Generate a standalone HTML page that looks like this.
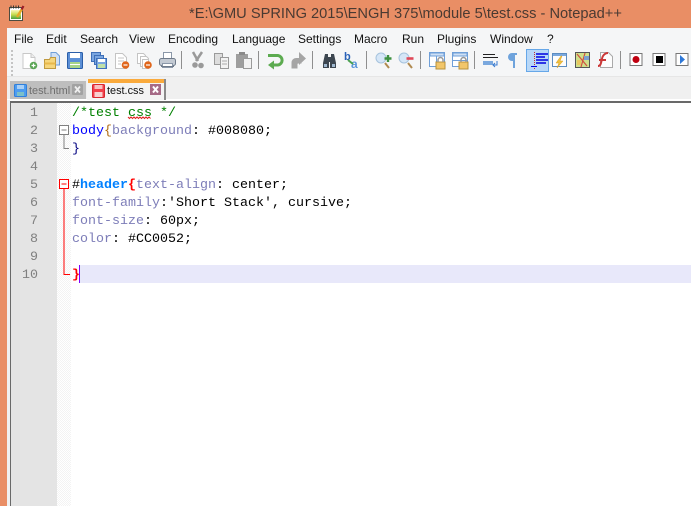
<!DOCTYPE html>
<html><head><meta charset="utf-8"><style>
html,body{margin:0;padding:0;width:691px;height:506px;overflow:hidden;background:#fff}
div,span{box-sizing:border-box}
.a{position:absolute}
#menu span{position:absolute;top:31px;font:12px/16px "Liberation Sans",sans-serif;color:#111}
.ln{position:absolute;left:11px;width:27px;text-align:right;font:13.33px/18px "Liberation Mono",monospace;color:#808080}
.c{position:absolute;left:72px;white-space:pre;font:13.33px/18px "Liberation Mono",monospace;color:#000}
.p{color:#7d7db8}.g{color:#008000}
</style></head><body>
<div class="a" style="left:0;top:0;width:691px;height:28px;background:#E98E65"></div>
<div class="a" style="left:0;top:28px;width:7px;height:478px;background:#E98E65"></div>
<div class="a" style="left:189px;top:5px;white-space:pre;font:14.65px/18px 'Liberation Sans',sans-serif;color:#4a3a32">*E:\GMU SPRING 2015\ENGH 375\module 5\test.css - Notepad++</div>
<div class="a" style="left:7px;top:28px;width:684px;height:20px;background:#F5F6F7"></div>
<div class="a" style="left:7px;top:48px;width:684px;height:28px;background:#F5F6F7"></div>
<div class="a" style="left:7px;top:76px;width:684px;height:1px;background:#E6E6E6"></div>
<div class="a" style="left:7px;top:77px;width:684px;height:23px;background:#F0F0F0"></div>
<div id="menu">
<span style="left:14px">File</span><span style="left:46px">Edit</span><span style="left:80px">Search</span><span style="left:129px">View</span><span style="left:168px">Encoding</span><span style="left:232px">Language</span><span style="left:298px">Settings</span><span style="left:354px">Macro</span><span style="left:402px">Run</span><span style="left:437px">Plugins</span><span style="left:490px">Window</span><span style="left:547px">?</span>
</div>
<!-- editor frame -->
<div class="a" style="left:7px;top:99px;width:684px;height:2px;background:#fff"></div>
<div class="a" style="left:7px;top:100px;width:3px;height:406px;background:#f0f0f0"></div>
<div class="a" style="left:10px;top:101px;width:681px;height:2px;background:#696969"></div>
<div class="a" style="left:10px;top:101px;width:1px;height:405px;background:#696969"></div>
<div class="a" style="left:11px;top:103px;width:46px;height:403px;background:#E4E4E4"></div>
<div class="a" style="left:57px;top:103px;width:14px;height:403px;background-color:#f3f3f3;background-image:linear-gradient(45deg,#fff 25%,transparent 25%,transparent 75%,#fff 75%),linear-gradient(45deg,#fff 25%,transparent 25%,transparent 75%,#fff 75%);background-size:2px 2px;background-position:0 0,1px 1px"></div>
<div class="a" style="left:80px;top:265px;width:611px;height:18px;background:#E8E8FA"></div>
<div class="a" style="left:79px;top:265px;width:1px;height:18px;background:#8000FF"></div>

<div class="ln" style="top:105px">1</div><div class="ln" style="top:123px">2</div><div class="ln" style="top:141px">3</div><div class="ln" style="top:159px">4</div><div class="ln" style="top:177px">5</div><div class="ln" style="top:195px">6</div><div class="ln" style="top:213px">7</div><div class="ln" style="top:231px">8</div><div class="ln" style="top:249px">9</div><div class="ln" style="top:267px">10</div>

<div class="c g" style="top:105px">/*test css */</div>
<div class="c" style="top:123px"><span style="color:#0000ff">body</span><span style="color:#b06a10">{</span><span class="p">background</span>: #008080;</div>
<div class="c" style="top:141px"><span style="color:#000080">}</span></div>
<div class="c" style="top:177px">#<span style="color:#0080ff;font-weight:bold">header</span><span style="color:#ff0000;font-weight:bold">{</span><span class="p">text-align</span>: center;</div>
<div class="c" style="top:195px"><span class="p">font-family</span>:'Short Stack', cursive;</div>
<div class="c" style="top:213px"><span class="p">font-size</span>: 60px;</div>
<div class="c" style="top:231px"><span class="p">color</span>: #CC0052;</div>
<div class="c" style="top:267px"><span style="color:#ff0000;font-weight:bold">}</span></div>

<!-- tabs -->
<div class="a" style="left:10px;top:81px;width:76px;height:18px;background:#BEBEBE"></div>
<div class="a" style="left:29px;top:83px;font:10.9px/16px 'Liberation Sans',sans-serif;color:#6e6e6e;white-space:pre">test.html</div>
<div class="a" style="left:87px;top:79px;width:79px;height:21px;background:#F4F4F4;border-right:2px solid #8a8a8a"></div>
<div class="a" style="left:88px;top:79px;width:76px;height:4px;background:#FAAA3C"></div>
<div class="a" style="left:107px;top:83px;font:10.9px/16px 'Liberation Sans',sans-serif;color:#111;white-space:pre">test.css</div>

<svg class="a" style="left:0;top:0" width="691" height="506" viewBox="0 0 691 506">
<defs>
<linearGradient id="ag" x1="0" y1="0" x2="0" y2="1"><stop offset="0" stop-color="#fbf7c0"/><stop offset=".5" stop-color="#c8dc50"/><stop offset="1" stop-color="#48a040"/></linearGradient>
</defs>
<!-- app icon -->
<rect x="9.500" y="7.500" width="13" height="13" fill="#fff" stroke="#4c4c40"/>
<rect x="11" y="10" width="10" height="9" fill="url(#ag)"/>
<path d="M11 5.500v3M13.500 5.500v3M16 5.500v3M18.500 5.500v3" stroke="#333" stroke-width="1"/>
<path d="M17 17l5-8" stroke="#e8a828" stroke-width="2.500"/><path d="M21.500 9.500l2-3.500" stroke="#9a1c28" stroke-width="2.200"/>

<!-- grip -->
<g fill="#c4c4c4"><rect x="11" y="50" width="2" height="2"/><rect x="11" y="54" width="2" height="2"/><rect x="11" y="58" width="2" height="2"/><rect x="11" y="62" width="2" height="2"/><rect x="11" y="66" width="2" height="2"/><rect x="11" y="70" width="2" height="2"/><rect x="11" y="74" width="2" height="2"/></g>

<!-- new -->
<path d="M23 53.500h8l4 4v11h-12z" fill="#fff" stroke="#c8c8c8"/><path d="M31 53.500v4h4" fill="#eee" stroke="#c8c8c8"/>
<circle cx="33.500" cy="65.500" r="3.800" fill="#5aa555"/><path d="M31.500 65.500h4M33.500 63.500v4" stroke="#fff" stroke-width="1.200"/>
<!-- open -->
<path d="M51 52.500h5l3.500 3.500v9h-8.500z" fill="#cfe0f5" stroke="#6f9fd8"/>
<path d="M44.500 59.500h5l1-2h5v11h-11z" fill="#f6d67c" stroke="#c09a40"/><path d="M44.500 63.500h11" stroke="#e8b84c" stroke-width="2"/>
<!-- save -->
<rect x="67.500" y="52.500" width="15" height="16" rx="1" fill="#5b8fd6" stroke="#2a5ea8"/><rect x="70" y="53" width="10" height="5" fill="#fff"/><rect x="70" y="62" width="10" height="6" fill="#a8d488"/><rect x="70" y="64" width="10" height="1" fill="#fff"/>
<!-- save all -->
<g fill="#7aa6e0" stroke="#3f70b8"><rect x="91.500" y="52.500" width="9" height="9"/><rect x="94.500" y="55.500" width="9" height="9"/><rect x="96.500" y="58.500" width="10" height="10"/></g><rect x="98" y="59" width="7" height="3" fill="#fff"/><rect x="98" y="64" width="7" height="4" fill="#bfe0a8"/>
<!-- close -->
<path d="M115.500 53.500h7l4 4v11h-11z" fill="#fff" stroke="#c4c4c4"/><path d="M118 58h6M118 61h6M118 64h3" stroke="#c4c4c4"/>
<circle cx="125.500" cy="65" r="3.800" fill="#e0661c"/><path d="M123.500 65h4" stroke="#fff" stroke-width="1.200"/>
<!-- close all -->
<path d="M137.500 53.500h6l2 2v8h-8z" fill="#fff" stroke="#c4c4c4"/><path d="M140.500 56.500h6l2 2v8h-8z" fill="#fff" stroke="#c4c4c4"/><path d="M142.500 59.500h6v9h-6z" fill="#fff" stroke="#c4c4c4"/>
<circle cx="148" cy="65" r="3.800" fill="#e0661c"/><path d="M146 65h4" stroke="#fff" stroke-width="1.200"/>
<!-- print -->
<rect x="163.500" y="52.500" width="8" height="6" fill="#fff" stroke="#8a97a8"/><rect x="159.500" y="58.500" width="16" height="7" rx="2" fill="#c3cad3" stroke="#6e7a8a"/><rect x="162.500" y="63.500" width="10" height="4" fill="#fff" stroke="#8a97a8"/><path d="M161 66.500h13" stroke="#6e7a8a"/>
<g fill="#8f8f8f"><rect x="181" y="51" width="1" height="18"/><rect x="258" y="51" width="1" height="18"/><rect x="312" y="51" width="1" height="18"/><rect x="366" y="51" width="1" height="18"/><rect x="420" y="51" width="1" height="18"/><rect x="474" y="51" width="1" height="18"/><rect x="620" y="51" width="1" height="18"/></g>
<!-- cut -->
<path d="M202 52l-6 9M193 52l5 9" stroke="#9a9a9a" stroke-width="2.500" fill="none"/><circle cx="195" cy="65" r="2.800" fill="#9a9a9a"/><circle cx="201" cy="65.500" r="2.800" fill="#9a9a9a"/>
<!-- copy -->
<path d="M214.500 53.500h8v11h-8z" fill="#ddd" stroke="#9a9a9a"/><path d="M220.500 57.500h8v11h-8z" fill="#f2f2f2" stroke="#9a9a9a"/><path d="M222 61h5M222 64h5" stroke="#aaa"/>
<!-- paste -->
<path d="M236 54h12v14h-12z" fill="#9e9e9e"/><path d="M239 52h6v3h-6z" fill="#8a8a8a"/><path d="M243.500 58.500h8v10h-8z" fill="#f2f2f2" stroke="#9a9a9a"/>
<!-- undo -->
<path d="M268 55.500h10a4.800 4.800 0 0 1 0 9.500h-6" fill="none" stroke="#5cab50" stroke-width="3"/><path d="M274 60.500l-6 4.500 6 4.500z" fill="#5cab50"/>
<!-- redo -->
<path d="M301 58.500h-5a4 4 0 0 0-4 4v5.500h5v-4q0-1 1.500-1h2.500z" fill="#a5a5a5" stroke="#a5a5a5"/><path d="M299 52l7 6.500-7 6.500z" fill="#a5a5a5"/>
<!-- find -->
<path d="M325 54h3v3h3v-3h3l2 9v5h-6v-6h-1v6h-6v-5z" fill="#3c4650"/><rect x="324" y="64" width="3" height="3" fill="#9fb8d0"/><rect x="332" y="64" width="3" height="3" fill="#9fb8d0"/>
<!-- replace -->
<text x="344" y="60" font-family="Liberation Sans" font-weight="bold" font-size="11" fill="#2a62b8">b</text><text x="351" y="68" font-family="Liberation Sans" font-weight="bold" font-size="12" fill="#5b96dc">a</text><path d="M348 60l5 4" stroke="#4aa050" stroke-width="2"/>
<!-- zoom in -->
<circle cx="381" cy="58" r="5" fill="#d5e6f7" stroke="#a6c3dd"/><path d="M385 63l4 5" stroke="#b08a50" stroke-width="2"/><path d="M388 55v7M384.500 58.500h7" stroke="#3d9040" stroke-width="2.400"/>
<!-- zoom out -->
<circle cx="404" cy="58" r="5" fill="#d5e6f7" stroke="#a6c3dd"/><path d="M408 63l4 5" stroke="#b08a50" stroke-width="2"/><path d="M406.500 58.500h7" stroke="#e04858" stroke-width="2.600"/>
<!-- sync -->
<rect x="429.500" y="52.500" width="15" height="14" fill="#fff" stroke="#6f9fd8"/><path d="M430 53h14v3h-14zM436.500 56v10" fill="#cfe0f5" stroke="#6f9fd8"/>
<rect x="436" y="62" width="9" height="7" fill="#f2c66a" stroke="#b8923c"/><path d="M438 62v-2a2.500 2.500 0 0 1 5 0v2" fill="none" stroke="#999" stroke-width="1.500"/>
<rect x="452.500" y="52.500" width="15" height="14" fill="#fff" stroke="#6f9fd8"/><path d="M453 53h14v3h-14zM453 60.500h14" fill="#cfe0f5" stroke="#6f9fd8"/>
<rect x="459" y="62" width="9" height="7" fill="#f2c66a" stroke="#b8923c"/><path d="M461 62v-2a2.500 2.500 0 0 1 5 0v2" fill="none" stroke="#999" stroke-width="1.500"/>
<!-- wrap -->
<path d="M483 54.500h12M483 57.500h15" stroke="#222" stroke-width="1"/><path d="M483 63h10" stroke="#7aa8de" stroke-width="4"/><path d="M497 61v4h-4M495 63l-2 2 2 2" fill="none" stroke="#3a7bd0"/>
<!-- pilcrow -->
<path d="M517 53h-5a3.500 3.500 0 0 0 0 8h1v7h2v-13h2z" fill="#6ea3dc"/>
<!-- indent active -->
<rect x="526.500" y="49.500" width="22" height="22" fill="#B8D8F8" stroke="#66A7E8"/>
<path d="M536 54h12M536 57h9M536 60h12M536 63h10" stroke="#0000e0" stroke-width="1.400"/><path d="M534.500 52v17" stroke="#c03030" stroke-dasharray="1 1"/><path d="M531 66.500h6" stroke="#0000e0"/>
<!-- udl -->
<rect x="552.500" y="53.500" width="14" height="13" fill="#fdfdfd" stroke="#5c8cc0"/><rect x="553" y="54" width="13" height="2" fill="#7aa8de"/><path d="M561 56l-5 7h3l-2 5 6-7h-3l2-5z" fill="#f0c040" stroke="#d8a020" stroke-width=".5"/>
<!-- map -->
<rect x="575.500" y="52.500" width="14" height="15" fill="#cfe08a" stroke="#555"/><path d="M577 54l10 12M585 53l-4 14" stroke="#d05040" stroke-width="1.200"/><path d="M584 56h5v4h-5z" fill="#7aa0d0"/><path d="M577 60h4v5h-4z" fill="#e8c860"/>
<!-- function list -->
<path d="M600.500 52.500h8l4 4v11h-12z" fill="#fdfdfd" stroke="#aaa"/><path d="M598 66c4 0 3-7 5-10s4-3 5-3M599 60h7" fill="none" stroke="#cc3838" stroke-width="2"/>
<!-- rec stop play -->
<rect x="630" y="53.500" width="12" height="12" fill="#fff" stroke="#777"/><circle cx="636" cy="59.500" r="3.500" fill="#c00010"/>
<rect x="653" y="53.500" width="12" height="12" fill="#fff" stroke="#777"/><rect x="656" y="56" width="7" height="7" fill="#000"/>
<rect x="676" y="53.500" width="12" height="12" fill="#fff" stroke="#777"/><path d="M680 55l5 4.500-5 4.500z" fill="#2e78d8"/>

<!-- tab icons -->
<rect x="14.500" y="84.500" width="12" height="12" rx="1" fill="#4d9cf0" stroke="#2f80dc"/><rect x="17" y="85" width="7" height="4" fill="#a9d0f6"/><rect x="17" y="92" width="7" height="4" fill="#7cc0c8"/>
<rect x="92.500" y="84.500" width="12" height="13" rx="1" fill="#f2404a" stroke="#d82830"/><rect x="94.500" y="85" width="8" height="4" fill="#f8c0c0"/><rect x="94.500" y="92" width="8" height="5" fill="#f8d0d0"/>
<rect x="72" y="84" width="11" height="11" rx="1" fill="#a2a2a2"/><path d="M75 86.500l5 6M80 86.500l-5 6" stroke="#eee" stroke-width="1.800"/>
<rect x="150" y="84" width="11" height="11" fill="#A66A86"/><path d="M153 86.500l5 6M158 86.500l-5 6" stroke="#fff" stroke-width="2"/>

<!-- squiggle under css -->
<path d="M128 117l1.500 1.500 1.500-1.500 1.500 1.500 1.500-1.500 1.500 1.500 1.500-1.500 1.500 1.500 1.500-1.500 1.500 1.500 1.500-1.500 1.500 1.500 1.500-1.500 1.500 1.500 1.500-1.500 1.500 1.500" fill="none" stroke="#e02020" stroke-width="1"/>

<!-- fold markers -->
<rect x="59.500" y="125.500" width="9" height="9" fill="#fff" stroke="#808080"/><path d="M61.500 130h5" stroke="#808080"/><path d="M64 135v13.500h5" fill="none" stroke="#808080"/>
<rect x="59.500" y="179.500" width="9" height="9" fill="#fff" stroke="#f00"/><path d="M61.500 184h5" stroke="#f00"/><path d="M64 189v85.500h6" fill="none" stroke="#f00"/>
</svg>
</body></html>
